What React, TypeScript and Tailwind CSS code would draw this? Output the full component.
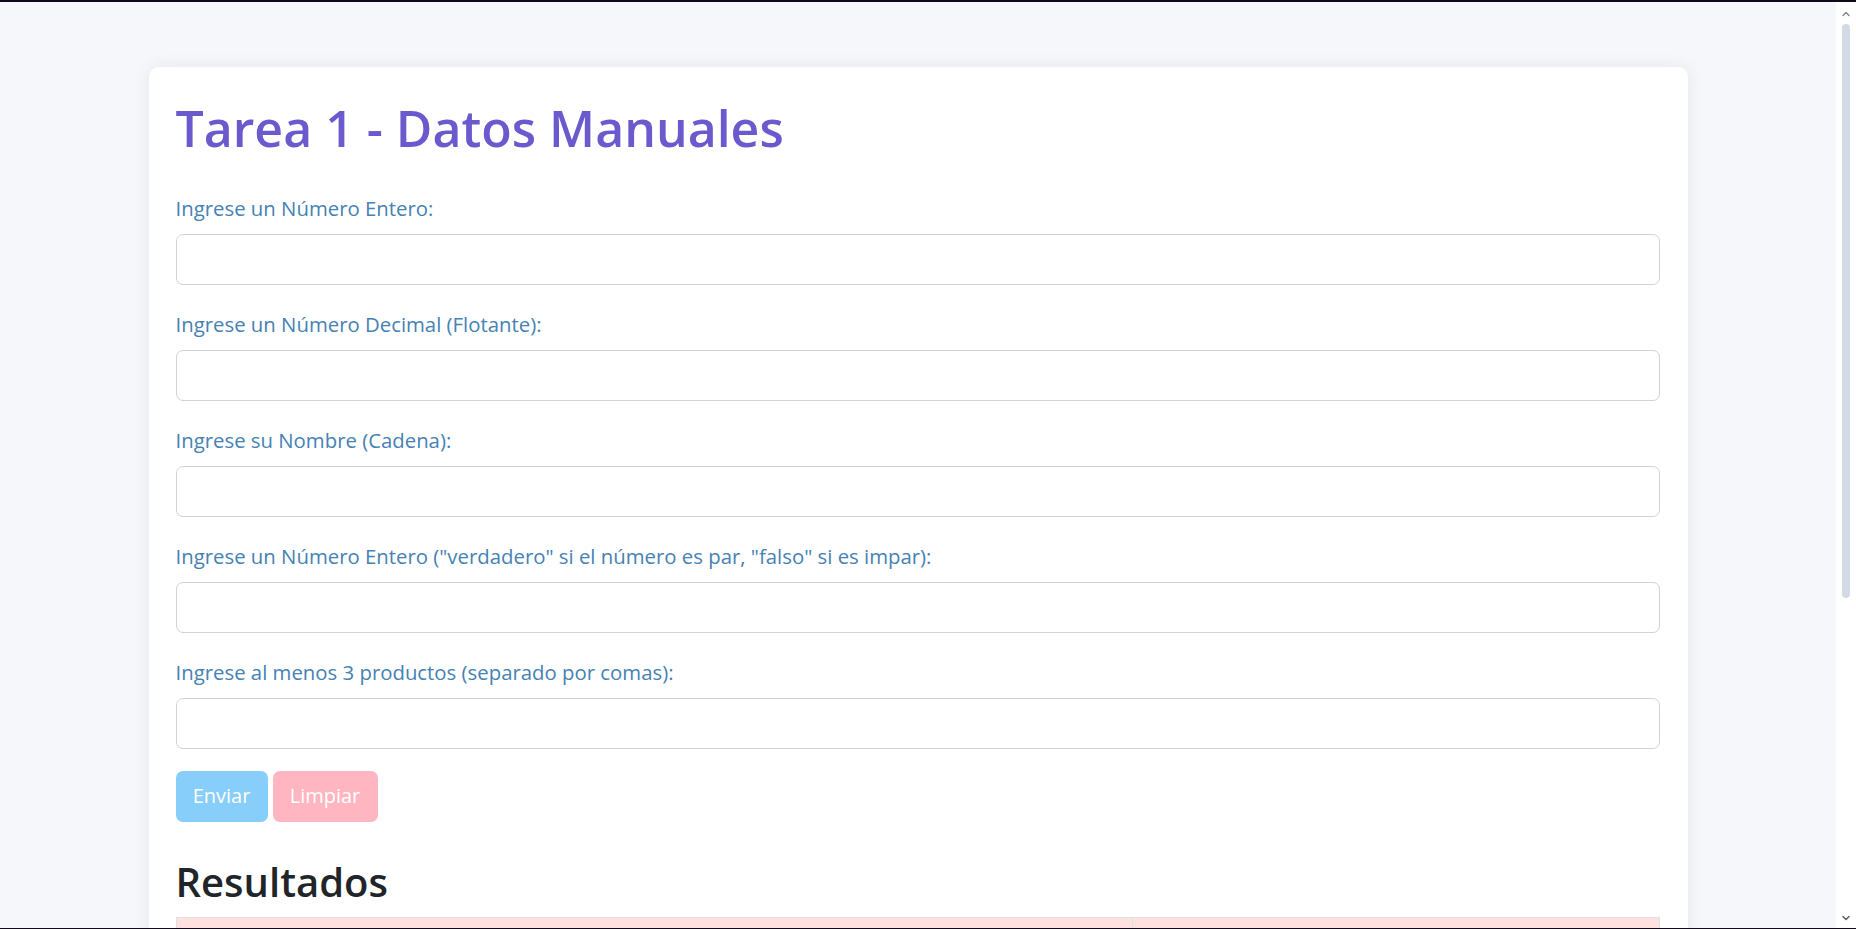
import { ChevronDown, ChevronUp } from "lucide-react";

const fields = [
  "Ingrese un Número Entero:",
  "Ingrese un Número Decimal (Flotante):",
  "Ingrese su Nombre (Cadena):",
  'Ingrese un Número Entero ("verdadero" si el número es par, "falso" si es impar):',
  "Ingrese al menos 3 productos (separado por comas):",
];

function Field({ label }: { label: string }) {
  return (
    <div className="mb-[24px]">
      <label className="block h-[30px] text-[20.35px] leading-[30px] text-[#4682b4] mb-[11px]">
        {label}
      </label>
      <input
        type="text"
        className="block w-full h-[51px] rounded-[7px] border border-[#ced4da] bg-white px-[15px] outline-none"
      />
    </div>
  );
}

function Scrollbar() {
  return (
    <div className="w-[20px] shrink-0 bg-white flex flex-col items-center">
      <ChevronUp className="mt-[6px] size-[12px] text-[#8a8a8a]" strokeWidth={3} />
      <div className="mt-[4px] h-[574px] w-[8px] rounded-full bg-[#d2dbe3]" />
      <div className="flex-1" />
      <ChevronDown className="mb-[4px] size-[12px] text-[#5f5f5f]" strokeWidth={3} />
    </div>
  );
}

export default function App() {
  return (
    <div className="h-[929px] flex flex-col overflow-hidden font-['Open_Sans',sans-serif]">
      <div className="h-[2px] bg-[#120a1c]" />
      <div className="flex flex-1 min-h-0">
        <main className="flex-1 bg-[#f6f7fb] overflow-hidden pt-[65px]">
          <div className="mx-auto w-[1539px] rounded-[10px] bg-white shadow-[0_0_18px_rgba(0,0,0,0.07)] pt-[31px] pl-[27px] pr-[28px] pb-[40px]">
            <h1 className="text-[50px] leading-[60px] font-semibold text-[#6a5acd] mb-[34.5px]">
              Tarea 1 - Datos Manuales
            </h1>

            <form>
              {fields.map((label) => (
                <Field key={label} label={label} />
              ))}

              <div className="flex gap-[5px] -mt-[2px]">
                <button
                  type="button"
                  className="w-[92px] h-[51px] rounded-[7px] bg-[#87cefa] text-white text-[20px]"
                >
                  Enviar
                </button>
                <button
                  type="button"
                  className="w-[105px] h-[51px] rounded-[7px] bg-[#ffb6c1] text-white text-[20px]"
                >
                  Limpiar
                </button>
              </div>
            </form>

            <h2 className="mt-[36px] text-[40px] leading-[48px] font-semibold text-[#212529] mb-[11px]">
              Resultados
            </h2>

            <table className="w-full border-collapse border border-[#dee2e6]">
              <tbody>
                <tr className="bg-[#ffe1df] h-[50px]">
                  <td className="w-[956px] border border-[#dee2e6]"></td>
                  <td className="border border-[#dee2e6]"></td>
                </tr>
                <tr className="bg-[#ffe1df] h-[50px]">
                  <td className="border border-[#dee2e6]"></td>
                  <td className="border border-[#dee2e6]"></td>
                </tr>
              </tbody>
            </table>
          </div>
        </main>
        <Scrollbar />
      </div>
      <div className="h-[1px] bg-[#120a1c]" />
    </div>
  );
}
